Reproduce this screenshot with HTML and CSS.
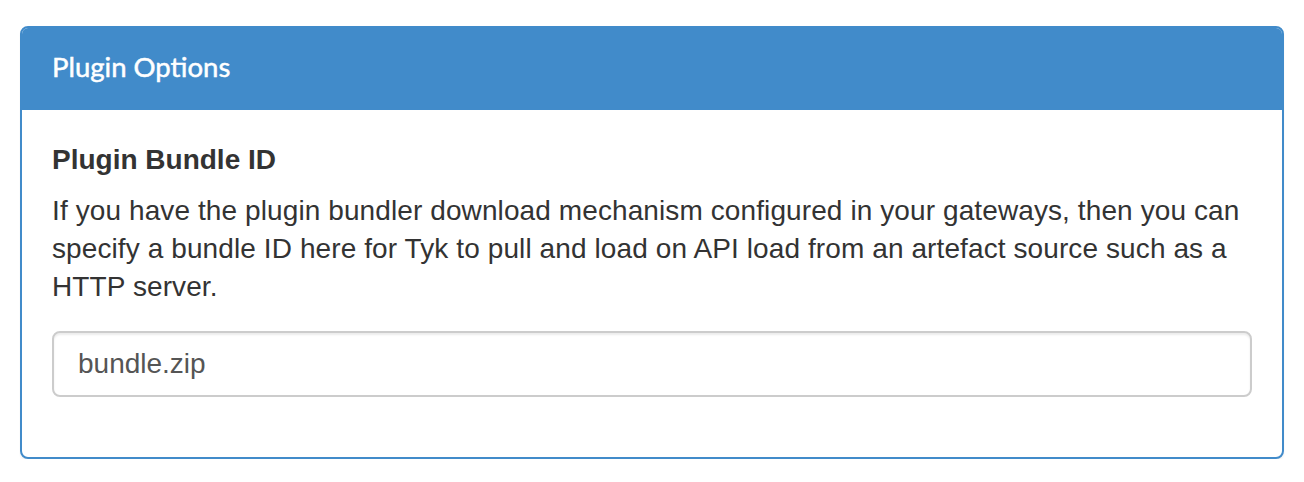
FILE: index.html
```html
<!DOCTYPE html>
<html>
<head>
<meta charset="utf-8">
<link rel="stylesheet" href="styles.css">
</head>
<body>
<div class="panel">
  <div class="panel-heading">
    <h3 class="panel-title">Plugin Options</h3>
  </div>
  <div class="panel-body">
    <div class="form-group">
      <label class="label">Plugin Bundle ID</label>
      <p class="help">If you have the plugin bundler download mechanism configured in your gateways, then you can specify a bundle ID here for Tyk to pull and load on API load from an artefact source such as a HTTP server.</p>
      <input class="input" type="text" value="bundle.zip">
    </div>
  </div>
</div>
</body>
</html>
```
FILE: styles.css
```css
* { box-sizing: border-box; }
html, body { margin: 0; padding: 0; background: #fff; }
body {
  padding: 26px 20px 0 20px;
  font-family: "Liberation Sans", Arial, sans-serif;
  color: #333;
}
.panel {
  width: 1264px;
  border: 2px solid #418bca;
  border-radius: 8px;
  background: #fff;
  box-shadow: 0 2px 2px rgba(0,0,0,0.05);
  overflow: hidden;
}
.panel-heading {
  background: #418bca;
  height: 82px;
  display: flex;
  align-items: center;
  padding: 0 29px 5px 30px;
}
.panel-title {
  margin: 0;
  font-family: Lato, "Open Sans", sans-serif;
  font-weight: 400;
  font-size: 27.5px;
  color: #fff;
  line-height: 1;
  -webkit-text-stroke: 0.5px #fff;
}
.panel-body {
  padding: 31px 30px 30px 30px;
}
.form-group {
  display: flex;
  flex-direction: column;
  margin-bottom: 30px;
}
.label {
  font-weight: 700;
  font-size: 28px;
  line-height: 38px;
  margin-bottom: 13px;
}
.help {
  margin: 0 0 25px 0;
  font-size: 28px;
  line-height: 38px;
  letter-spacing: 0.1px;
}
.input {
  width: 1200px;
  height: 66px;
  border: 2px solid #ccc;
  border-radius: 8px;
  padding: 0 24px;
  font-family: "Liberation Sans", Arial, sans-serif;
  font-size: 28px;
  color: #555;
  box-shadow: inset 0 2px 2px rgba(0,0,0,0.075);
  outline: none;
  background: #fff;
}
```
